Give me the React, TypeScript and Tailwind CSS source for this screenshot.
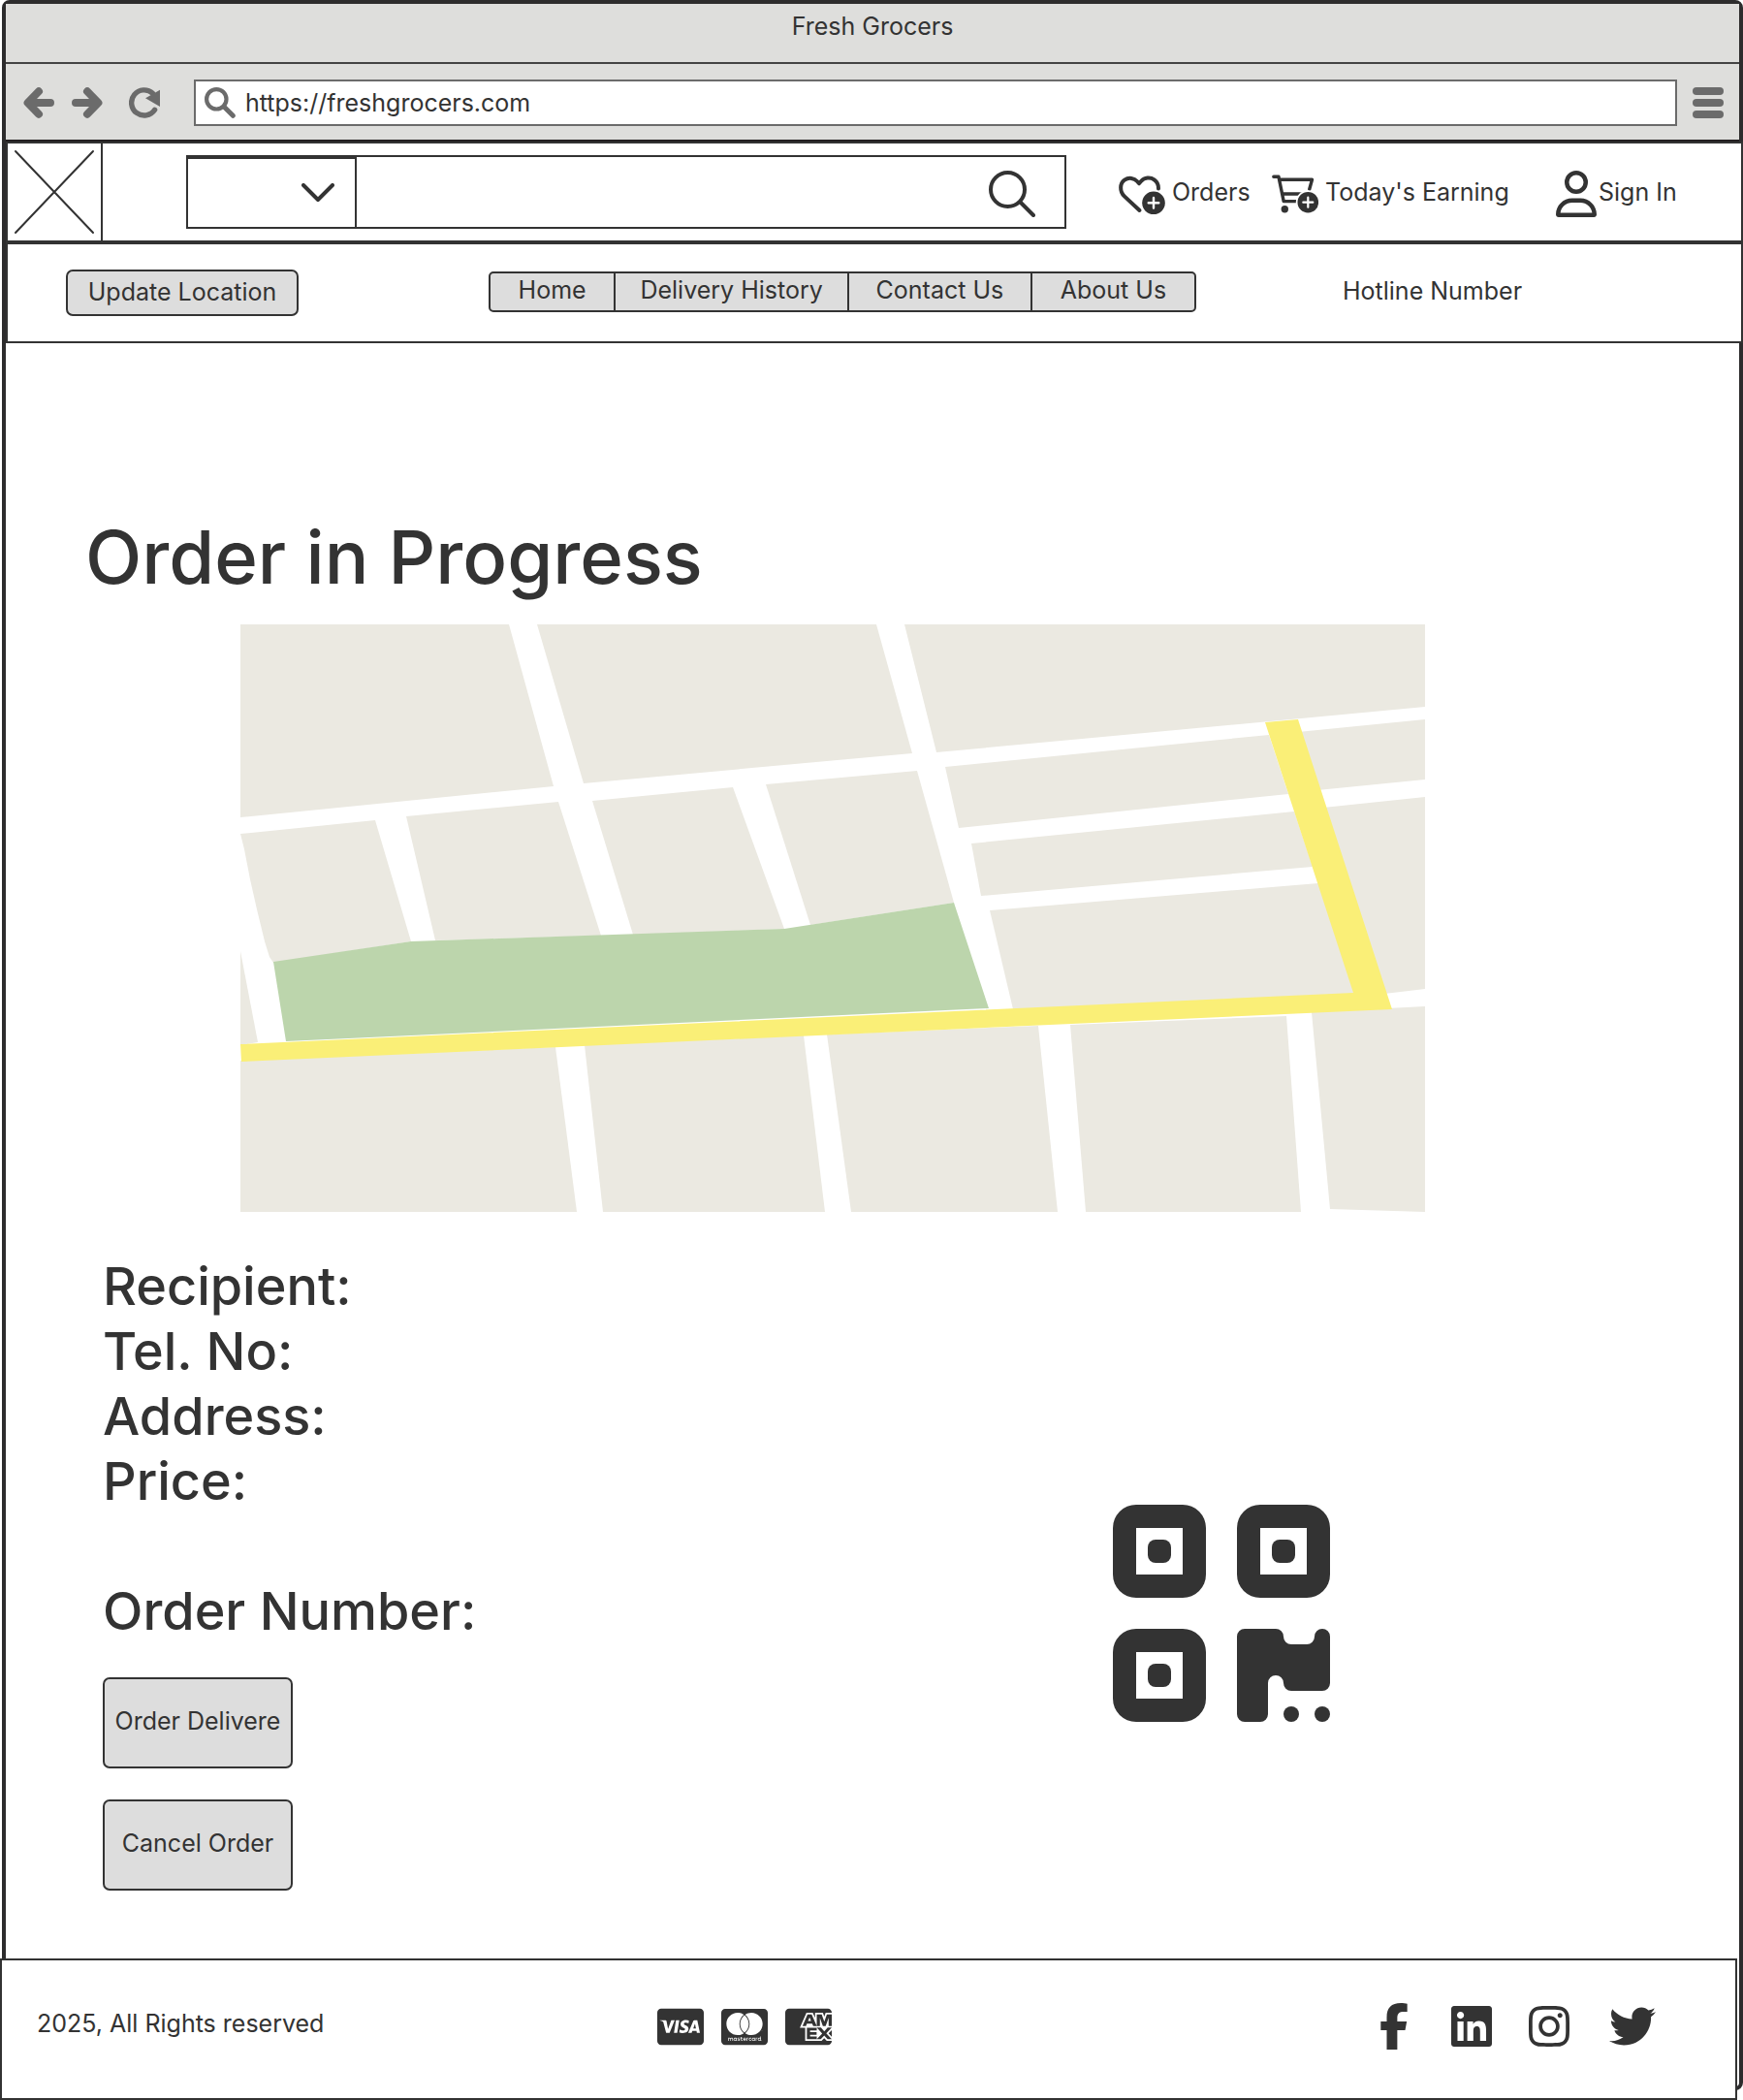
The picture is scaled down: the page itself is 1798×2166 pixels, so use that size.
import { FaCcAmex, FaCcMastercard, FaCcVisa, FaFacebookF, FaInstagram, FaLinkedin, FaRegUser, FaTwitter } from 'react-icons/fa6';

const blocks = [
  '0,0 277,0 323,167 0,199',
  '306,0 656,0 693,133 354,164',
  '685,0 1222,0 1222,85 718,132',
  '0,216 139,202 176,327 34,349 30,343 25,327 17,294 10,263 4,232',
  '171,198 328,183 372,321 201,326',
  '363,182 508,168 561,314 405,320',
  '542,165 698,151 736,287 588,310',
  '0,337 18,431 0,434',
  '727,147 1061,114 1081,175 741,210',
  '754,226 1087,193 1106,250 764,280',
  '773,295 1112,267 1149,381 797,397',
  '1091,111 1222,98 1222,160 1111,171',
  '1117,189 1222,178 1222,376 1180,381',
  '0,450 325,436 347,606 0,606',
  '355,434 581,424 603,606 374,606',
  '605,423 823,414 843,606 630,606',
  '856,413 1079,404 1094,606 872,606',
  '1105,400 1222,394 1222,606 1124,603',
];

function StreetMap() {
  return (
    <svg viewBox="0 0 1222 606" className="ml-[142px] mt-[22px] block w-full max-w-[1222px]" role="img" aria-label="Delivery route map">
      {blocks.map((points) => (
        <polygon key={points} points={points} fill="#ebe9e1" />
      ))}
      <polygon points="34,348 176,327 561,314 736,287 772,396 47,430" fill="#bcd5ac" />
      <polygon points="0,433 1148,380 1057,101 1091,98 1188,397 1,451" fill="#faef77" />
    </svg>
  );
}

function ArrowIcon({ flip = false }: { flip?: boolean }) {
  return (
    <svg viewBox="0 0 32 32" className={flip ? 'size-8 rotate-180' : 'size-8'} fill="none" stroke="#6b6b6b" strokeWidth="8" strokeLinecap="round" strokeLinejoin="round">
      <path d="M16 4.3 4.6 16 16 27.7M6 16h22" />
    </svg>
  );
}

function ReloadIcon() {
  return (
    <svg viewBox="0 0 32 32" className="size-8">
      <path d="M24.5 6.2A13.1 13.1 0 1 0 26.6 23.3" fill="none" stroke="#6b6b6b" strokeWidth="5.4" strokeLinecap="round" />
      <path d="M32 2.7V20L17 11.3l4-2.4Z" fill="#6b6b6b" />
    </svg>
  );
}

function HeartPlusIcon() {
  return (
    <svg viewBox="0 0 48 48" className="mt-1 size-12 shrink-0" fill="none" stroke="#333" strokeWidth="4" strokeLinecap="round" strokeLinejoin="round">
      <path d="M21.5 41 5.8 26.4C.8 21.6 1 13.2 6 9.7c4.5-3.2 10-2 13 1.3l2 2.3 2-2.3c3.6-4 9.6-4.6 13.6-1.6 3.3 2.4 4.6 5.4 4.4 9.1" />
      <circle cx="36" cy="33.3" r="13.3" fill="#fff" stroke="none" />
      <circle cx="36" cy="33.3" r="11.8" fill="#333" stroke="none" />
      <path d="M36 28v10.6M30.7 33.3h10.6" stroke="#fff" strokeWidth="2.4" />
    </svg>
  );
}

function CartPlusIcon() {
  return (
    <svg viewBox="0 0 48 48" className="mt-1 size-12 shrink-0" fill="none" stroke="#333" strokeWidth="3.4" strokeLinecap="round" strokeLinejoin="round">
      <path d="M1.8 6.3h5.2l5.2 25.3H26M8 9.2h33.5l-2.8 10M11 24h20" />
      <circle cx="13.3" cy="39.7" r="3.7" fill="#333" stroke="none" />
      <circle cx="37.3" cy="32.7" r="12.5" fill="#fff" stroke="none" />
      <circle cx="37.3" cy="32.7" r="10.8" fill="#333" stroke="none" />
      <path d="M37.3 27.7v10M32.3 32.7h10" stroke="#fff" strokeWidth="2.2" />
    </svg>
  );
}

function QrFinder({ x, y }: { x: number; y: number }) {
  return (
    <g transform={`translate(${x} ${y})`}>
      <rect width="96" height="96" rx="24" fill="#333" />
      <rect x="24" y="24" width="48" height="48" fill="#fff" />
      <rect x="36" y="36" width="24" height="24" rx="8" fill="#333" />
    </g>
  );
}

function QrIcon() {
  return (
    <svg viewBox="0 0 224 224" className="mt-[259px] size-56 shrink-0" role="img" aria-label="QR code">
      <QrFinder x={0} y={0} />
      <QrFinder x={128} y={0} />
      <QrFinder x={0} y={128} />
      <path
        d="M136 128h32a8 8 0 0 1 8 8 8 8 0 0 0 8 8h16a8 8 0 0 0 8-8 8 8 0 0 1 16 0v48a8 8 0 0 1-8 8h-32a8 8 0 0 1-8-8 8 8 0 0 0-16 0v32a8 8 0 0 1-8 8h-16a8 8 0 0 1-8-8v-80a8 8 0 0 1 8-8Z"
        fill="#333"
      />
      <circle cx="184" cy="216" r="8" fill="#333" />
      <circle cx="216" cy="216" r="8" fill="#333" />
    </svg>
  );
}

function BrowserChrome() {
  return (
    <div className="bg-[#dededc]">
      <div className="border-b-2 border-[#444] pt-[7px] pb-[21px] text-center leading-8">Fresh Grocers</div>
      <div className="flex items-center border-b-2 border-[#231f20] pt-4 pr-4 pb-[14px] pl-[18px]">
        <button type="button" aria-label="Back"><ArrowIcon /></button>
        <button type="button" aria-label="Forward" className="ml-[18px]"><ArrowIcon flip /></button>
        <button type="button" aria-label="Reload" className="ml-[27px]"><ReloadIcon /></button>
        <label className="ml-[35px] flex h-12 flex-1 items-center border-2 border-[#6b6b6b] bg-white pl-[9px]">
          <svg viewBox="0 0 32 32" className="size-8 shrink-0" fill="none" stroke="#6b6b6b" strokeLinecap="round">
            <circle cx="12.3" cy="12.3" r="10.2" strokeWidth="4.2" />
            <path d="m20 20 9.3 9.3" strokeWidth="5" />
          </svg>
          <input aria-label="Address" defaultValue="https://freshgrocers.com" className="ml-[10px] min-w-0 flex-1 bg-transparent outline-none" />
        </label>
        <button type="button" aria-label="Menu" className="ml-4 flex w-8 flex-col gap-1">
          <span className="h-2 rounded-full bg-[#6b6b6b]" />
          <span className="h-2 rounded-full bg-[#6b6b6b]" />
          <span className="h-2 rounded-full bg-[#6b6b6b]" />
        </button>
      </div>
    </div>
  );
}

function SiteHeader() {
  return (
    <header className="-mr-1 border-2 border-[#333] bg-white">
      <div className="flex h-[104px] items-center border-b-4 border-[#333]">
        <a href="#" aria-label="Fresh Grocers home" className="h-full w-[98px] shrink-0 border-r-2 border-[#333]">
          <svg viewBox="0 0 96 100" className="h-full w-full" stroke="#333" strokeWidth="2" strokeLinecap="round">
            <path d="m8 8 80 84M88 8 8 92" />
          </svg>
        </a>
        <form className="ml-[86px] flex h-[76px] max-w-[908px] flex-1 border-2 border-[#333]">
          <div className="relative h-full w-[174px] border-t-2 border-r-2 border-[#333]">
            <select aria-label="Category" className="h-full w-full appearance-none bg-transparent" />
            <svg viewBox="0 0 34 20" className="pointer-events-none absolute top-[25px] right-[21px] h-5 w-[34px]" fill="none" stroke="#333" strokeWidth="4" strokeLinecap="round" strokeLinejoin="round">
              <path d="m2 2 15 15L32 2" />
            </svg>
          </div>
          <input aria-label="Search" className="min-w-0 flex-1 px-4 outline-none" />
          <button type="submit" aria-label="Search" className="mt-1 mr-[30px]">
            <svg viewBox="0 0 48 48" className="size-12" fill="none" stroke="#333" strokeWidth="4" strokeLinecap="round">
              <circle cx="19.5" cy="19.5" r="17.5" />
              <path d="m32.5 32.5 13.5 13.5" />
            </svg>
          </button>
        </form>
        <nav aria-label="Account" className="ml-[54px] flex shrink-0">
          <a href="#" className="flex w-[158px] items-center gap-[7px] whitespace-nowrap"><HeartPlusIcon />Orders</a>
          <a href="#" className="flex w-[293px] items-center gap-[7px] whitespace-nowrap"><CartPlusIcon />Today's Earning</a>
          <a href="#" className="flex items-center gap-[2px] whitespace-nowrap"><FaRegUser className="mt-1 h-12 w-[42px]" />Sign In</a>
        </nav>
      </div>
      <div className="flex h-[100px] items-center pl-[60px]">
        <button type="button" className="h-12 w-60 rounded-[7px] border-2 border-[#333] bg-[#ddd] pb-0.5">Update Location</button>
        <nav aria-label="Main" className="mb-0.5 ml-[196px] grid h-[42px] w-[730px] grid-cols-[130fr_242fr_190fr_168fr] rounded-[5px] border-2 border-[#333] bg-[#ddd] text-center leading-[34px]">
          <a href="#" className="border-r-2 border-[#333]">Home</a>
          <a href="#" className="border-r-2 border-[#333]">Delivery History</a>
          <a href="#" className="border-r-2 border-[#333]">Contact Us</a>
          <a href="#">About Us</a>
        </nav>
        <p className="mb-1 ml-[151px]">Hotline Number</p>
      </div>
    </header>
  );
}

function OrderPage() {
  return (
    <main className="grow pt-[172px] pb-[70px] pl-[100px]">
      <h1 className="-ml-[18px] text-[76px] leading-[96px] font-medium">Order in Progress</h1>
      <StreetMap />
      <div className="mt-[43px] flex">
        <div className="w-[1042px]">
          <div className="text-[54px] leading-[67px] font-medium">
            <p>Recipient:</p>
            <p>Tel. No:</p>
            <p>Address:</p>
            <p>Price:</p>
            <p className="mt-[67px]">Order Number:</p>
          </div>
          <div className="mt-[35px] flex w-[196px] flex-col gap-8">
            <button type="button" className="h-[94px] rounded-[7px] border-2 border-[#333] bg-[#ddd] pb-1 whitespace-nowrap">Order Delivere</button>
            <button type="button" className="h-[94px] rounded-[7px] border-2 border-[#333] bg-[#ddd] pb-1 whitespace-nowrap">Cancel Order</button>
          </div>
        </div>
        <QrIcon />
      </div>
    </main>
  );
}

function SiteFooter() {
  return (
    <footer className="mr-0.5 -mb-[14px] -ml-1.5 grid h-[146px] grid-cols-[640px_720px_1fr] items-center border-2 border-[#333] bg-white pb-1.5 pl-9">
      <p className="mb-1.5">2025, All Rights reserved</p>
      <div className="flex gap-[18px]">
        <FaCcVisa className="h-[43px] w-12" />
        <FaCcMastercard className="h-[43px] w-12" />
        <FaCcAmex className="h-[43px] w-12" />
      </div>
      <div className="flex">
        <a href="#" aria-label="Facebook" className="flex w-20 justify-center"><FaFacebookF className="h-12 w-[30px]" /></a>
        <a href="#" aria-label="LinkedIn" className="flex w-20 justify-center"><FaLinkedin className="h-12 w-[42px]" /></a>
        <a href="#" aria-label="Instagram" className="flex w-20 justify-center"><FaInstagram className="h-12 w-[42px]" /></a>
        <a href="#" aria-label="Twitter" className="flex w-[92px] justify-center"><FaTwitter className="size-12" /></a>
      </div>
    </footer>
  );
}

export default function App() {
  return (
    <div className="flex min-h-screen flex-col bg-white pb-2.5 pl-0.5 font-['Inter',sans-serif] text-[25px] leading-8 text-[#333]">
      <div className="flex grow flex-col rounded-lg border-4 border-[#2d2c2d]">
        <BrowserChrome />
        <SiteHeader />
        <OrderPage />
        <SiteFooter />
      </div>
    </div>
  );
}
